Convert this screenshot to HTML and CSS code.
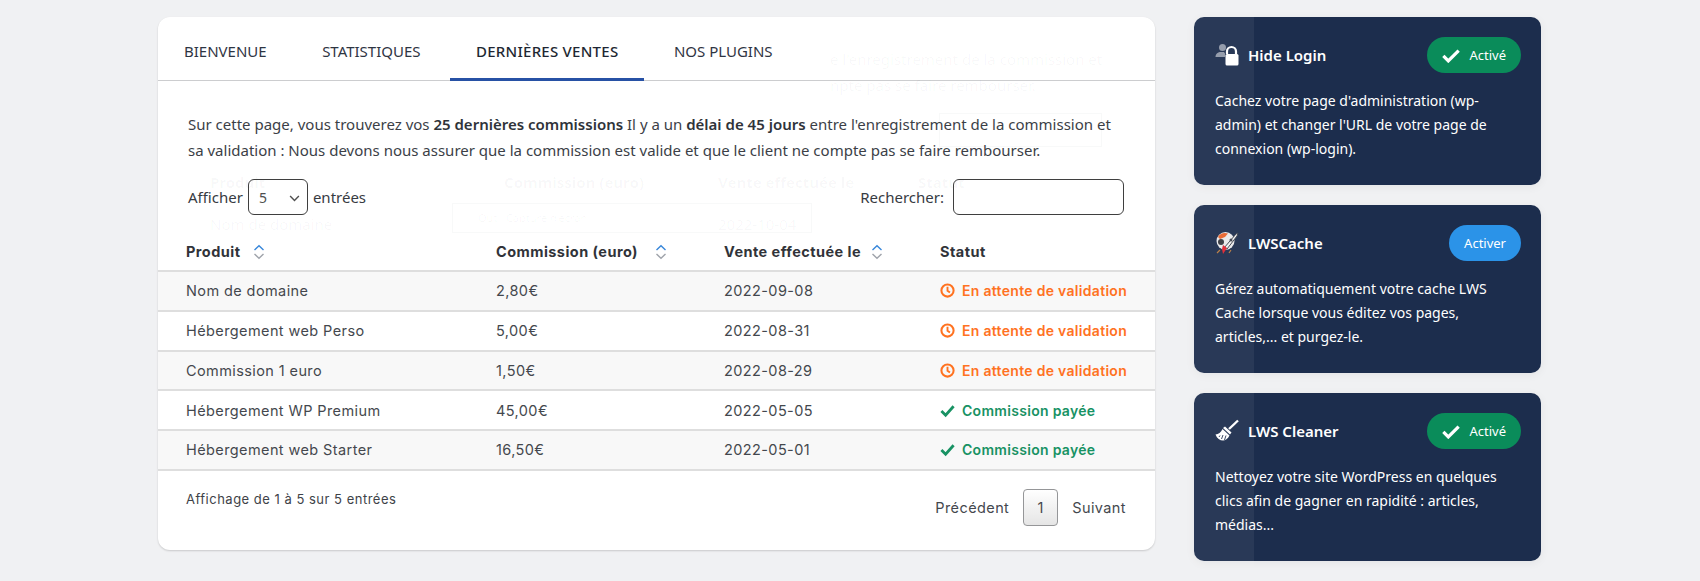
FILE: index.html
```html
<!DOCTYPE html>
<html lang="fr">
<head>
<meta charset="utf-8">
<title>Dernières ventes</title>
<link rel="stylesheet" href="styles.css">
</head>
<body>
<div class="page">
  <main class="panel">
    <nav class="tabs">
      <a class="tab">BIENVENUE</a>
      <a class="tab">STATISTIQUES</a>
      <a class="tab tab-active">DERNIÈRES VENTES</a>
      <a class="tab">NOS PLUGINS</a>
    </nav>
    <p class="intro">Sur cette page, vous trouverez vos <b>25 dernières commissions</b> Il y a un <b>délai de 45 jours</b> entre l'enregistrement de la commission et sa validation : Nous devons nous assurer que la commission est valide et que le client ne compte pas se faire rembourser.</p>
    <div class="controls">
      <label class="length">Afficher
        <span class="select-wrap">
          <select class="select"><option>5</option></select>
          <svg class="chevron" viewBox="0 0 12 8" width="11" height="7"><path d="M1 1.2 6 6.2 11 1.2" fill="none" stroke="#444" stroke-width="1.6"/></svg>
        </span>
        entrées</label>
      <label class="search">Rechercher:<input class="search-input" type="text"></label>
    </div>
    <table class="sales">
      <colgroup><col class="c1"><col class="c2"><col class="c3"><col class="c4"></colgroup>
      <thead>
        <tr>
          <th><span class="th-in">Produit<svg class="sort s1" viewBox="0 0 12 16" width="12" height="16"><path d="M1.5 6 6 1.8 10.5 6" fill="none" stroke="#2b7fd8" stroke-width="1.4"/><path d="M1.5 10 6 14.2 10.5 10" fill="none" stroke="#9a9ea6" stroke-width="1.4"/></svg></span></th>
          <th><span class="th-in">Commission (euro)<svg class="sort s2" viewBox="0 0 12 16" width="12" height="16"><path d="M1.5 6 6 1.8 10.5 6" fill="none" stroke="#2b7fd8" stroke-width="1.4"/><path d="M1.5 10 6 14.2 10.5 10" fill="none" stroke="#9a9ea6" stroke-width="1.4"/></svg></span></th>
          <th><span class="th-in">Vente effectuée le<svg class="sort s3" viewBox="0 0 12 16" width="12" height="16"><path d="M1.5 6 6 1.8 10.5 6" fill="none" stroke="#2b7fd8" stroke-width="1.4"/><path d="M1.5 10 6 14.2 10.5 10" fill="none" stroke="#9a9ea6" stroke-width="1.4"/></svg></span></th>
          <th>Statut</th>
        </tr>
      </thead>
      <tbody>
        <tr class="odd"><td>Nom de domaine</td><td>2,80€</td><td>2022-09-08</td><td><span class="status wait"><svg class="st-icon" viewBox="0 0 16 16" width="15" height="15"><circle cx="8" cy="8" r="6.5" fill="none" stroke="currentColor" stroke-width="2.2"/><path d="M8 4v4.3l2.6 1.9" fill="none" stroke="currentColor" stroke-width="2"/></svg>En attente de validation</span></td></tr>
        <tr><td>Hébergement web Perso</td><td>5,00€</td><td>2022-08-31</td><td><span class="status wait"><svg class="st-icon" viewBox="0 0 16 16" width="15" height="15"><circle cx="8" cy="8" r="6.5" fill="none" stroke="currentColor" stroke-width="2.2"/><path d="M8 4v4.3l2.6 1.9" fill="none" stroke="currentColor" stroke-width="2"/></svg>En attente de validation</span></td></tr>
        <tr class="odd"><td>Commission 1 euro</td><td>1,50€</td><td>2022-08-29</td><td><span class="status wait"><svg class="st-icon" viewBox="0 0 16 16" width="15" height="15"><circle cx="8" cy="8" r="6.5" fill="none" stroke="currentColor" stroke-width="2.2"/><path d="M8 4v4.3l2.6 1.9" fill="none" stroke="currentColor" stroke-width="2"/></svg>En attente de validation</span></td></tr>
        <tr><td>Hébergement WP Premium</td><td>45,00€</td><td>2022-05-05</td><td><span class="status paid"><svg class="st-icon" viewBox="0 0 16 16" width="15" height="15"><path d="M1.5 8.5 6 13 14.5 3.5" fill="none" stroke="currentColor" stroke-width="3"/></svg>Commission payée</span></td></tr>
        <tr class="odd"><td>Hébergement web Starter</td><td>16,50€</td><td>2022-05-01</td><td><span class="status paid"><svg class="st-icon" viewBox="0 0 16 16" width="15" height="15"><path d="M1.5 8.5 6 13 14.5 3.5" fill="none" stroke="currentColor" stroke-width="3"/></svg>Commission payée</span></td></tr>
      </tbody>
    </table>
    <div class="table-foot">
      <div class="info">Affichage de 1 à 5 sur 5 entrées</div>
      <div class="pager"><a>Précédent</a><a class="page-num">1</a><a>Suivant</a></div>
    </div>
  </main>

  <aside class="side">
    <section class="plugin">
      <header class="plugin-head">
        <svg class="plugin-icon" viewBox="0 0 24 24" width="24" height="24"><circle cx="7.5" cy="4.5" r="3.5" fill="#8f97a7"/><path d="M0.5 14c0-3.5 2.5-5 5.5-5h3l1 1.5v3.500z" fill="#8f97a7"/><path d="M12 11V8.500a4.500 4.500 0 0 1 9 0V11" fill="none" stroke="#fff" stroke-width="2.2"/><rect x="10.500" y="11" width="13" height="11.500" rx="1.5" fill="#fff"/></svg>
        <h3 class="plugin-title">Hide Login</h3>
        <span class="badge on"><svg class="badge-check" viewBox="0 0 20 16" width="18" height="15"><path d="M1.5 8.5 7 14 18.5 2.5" fill="none" stroke="#fff" stroke-width="3.6"/></svg>Activé</span>
      </header>
      <p class="plugin-text">Cachez votre page d'administration (wp-admin) et changer l'URL de votre page de connexion (wp-login).</p>
    </section>
    <section class="plugin">
      <header class="plugin-head">
        <svg class="plugin-icon" viewBox="0 0 24 24" width="24" height="24"><circle cx="10.500" cy="10" r="9" fill="#e9e9ea"/><path d="M3 6c2-3.500 6-5 10-3.500L10 6 5 8z" fill="#e8622a"/><circle cx="6" cy="11" r="3" fill="#33363d"/><path d="M9 17 21 3l2-1-1 3-10 13z" fill="#f4f4f4" stroke="#3a3f4a" stroke-width="1"/><path d="M8 14l4 3-4 6-1-5z" fill="#e0232e"/><circle cx="16" cy="9" r="1.5" fill="#3a3f4a"/><path d="M2 22l3-3M14 22l2-3" stroke="#b9793e" stroke-width="1.2"/></svg>
        <h3 class="plugin-title">LWSCache</h3>
        <span class="badge off">Activer</span>
      </header>
      <p class="plugin-text">Gérez automatiquement votre cache LWS Cache lorsque vous éditez vos pages, articles,... et purgez-le.</p>
    </section>
    <section class="plugin">
      <header class="plugin-head">
        <svg class="plugin-icon" viewBox="0 0 24 24" width="24" height="24"><path d="M14 10 23 1.500" stroke="#fff" stroke-width="2.4" fill="none"/><path d="M10 7.500l6.500 6-1.500 2-7-6.500z" fill="#fff"/><path d="M7.500 10 14.500 16.500C13 20 10 21.500 8 21.500 5 21.500 2 19.500 0.500 15.500 3.500 15 6 13.500 7.500 10z" fill="#fff"/><path d="M5 16.500 4 18M8 16 6.500 20M11 16.500 9.500 21" stroke="#1c2d4d" stroke-width=".9"/></svg>
        <h3 class="plugin-title">LWS Cleaner</h3>
        <span class="badge on"><svg class="badge-check" viewBox="0 0 20 16" width="18" height="15"><path d="M1.5 8.5 7 14 18.5 2.5" fill="none" stroke="#fff" stroke-width="3.6"/></svg>Activé</span>
      </header>
      <p class="plugin-text">Nettoyez votre site WordPress en quelques clics afin de gagner en rapidité : articles, médias...</p>
    </section>
  </aside>
</div>

<div class="ghost" aria-hidden="true">
  <span class="g g1">e l'enregistrement de la commission et</span>
  <span class="g g2">npte pas se faire rembourser.</span>
  <span class="gb gb1"></span>
  <span class="g g3">Produit</span>
  <span class="g g4">Commission (euro)</span>
  <span class="g g5">Vente effectuée le</span>
  <span class="g g6">Statut</span>
  <span class="g g7">Nom de domaine</span>
  <span class="g g8">2022-10-04</span>
  <span class="gb gb2"></span>
  <span class="g g9">Outil Capture d'écran</span>
</div>
</body>
</html>
```

FILE: styles.css
```css
* { box-sizing: border-box; }
html, body { margin: 0; height: 581px; overflow: hidden; }
body {
  background: #f0f1f3;
  font-family: "Noto Sans", "Open Sans", sans-serif;
  color: #2b2f36;
  position: relative;
}
.page {
  display: flex;
  align-items: flex-start;
  gap: 39px;
  padding: 17px 0 0 158px;
}

/* main panel */
.panel {
  width: 997px;
  height: 533px;
  background: #fff;
  border-radius: 12px;
  box-shadow: 0 1px 2px rgba(0, 0, 0, .18);
}
.tabs {
  display: flex;
  gap: 3.5px;
  height: 64px;
  border-bottom: 1px solid #c9cacd;
}
.tab {
  display: flex;
  align-items: center;
  height: 64px;
  padding: 4px 26px 0;
  font-size: 15px;
  color: #1f2937;
}
.tab-active {
  font-weight: 500;
  color: #111827;
  letter-spacing: .25px;
  border-bottom: 3px solid #1a47a0;
  padding-top: 7px;
}
.intro {
  margin: 0;
  padding: 30px 30px 0 30px;
  font-size: 15px;
  line-height: 26px;
  color: #30343b;
  height: 82px;
}
.intro b { font-weight: 600; color: #23272e; }
.controls {
  display: flex;
  justify-content: space-between;
  padding: 16px 31px 0 30px;
  font-size: 15px;
  height: 52px;
}
.length, .search { display: flex; align-items: center; gap: 5px; height: 36px; }
.search { gap: 9px; }
.select-wrap { position: relative; display: block; width: 60px; height: 36px; }
.select {
  width: 60px;
  height: 36px;
  appearance: none;
  background: #fff;
  border: 1px solid #333;
  border-radius: 6px;
  padding: 2px 10px;
  font: 14px "Noto Sans", sans-serif;
  color: #444;
}
.chevron { position: absolute; right: 8px; top: 16px; }
.search-input {
  width: 171px;
  height: 36px;
  background: #fff;
  border: 1px solid #333;
  border-radius: 6px;
}

/* table */
.sales {
  width: 997px;
  border-collapse: separate;
  border-spacing: 0;
  table-layout: fixed;
  font-family: Inter, "Noto Sans", sans-serif;
  font-size: 14.5px;
  letter-spacing: .4px;
}
.c1 { width: 310px; }
.c2 { width: 228px; }
.c3 { width: 216px; }
.c4 { width: 243px; }
.sales th, .sales td { padding: 0 0 0 28px; text-align: left; }
.sales th {
  height: 57px;
  padding-top: 18px;
  font-size: 14.5px;
  font-weight: 700;
  letter-spacing: .45px;
  color: #24272d;
  border-bottom: 2px solid #dcdcdc;
}
.th-in { display: flex; align-items: center; }
.sort { flex: none; }
.s1 { margin-left: 13px; }
.s2 { margin-left: 17px; }
.s3 { margin-left: 10px; }
.sales td {
  height: 39.75px;
  color: #383c43;
  border-bottom: 2px solid #dcdcdc;
}
.odd td { background: #f8f8f8; }
.status {
  display: flex;
  align-items: center;
  gap: 7px;
  font-weight: 600;
  font-size: 14px;
  letter-spacing: .3px;
}
.st-icon { flex: none; }
.wait { color: #ff6a13; }
.paid { color: #0a8c5a; }

.table-foot {
  display: flex;
  justify-content: space-between;
  align-items: flex-start;
  padding: 18px 29px 0 28px;
  font-family: Inter, "Noto Sans", sans-serif;
}
.info { font-size: 13px; letter-spacing: .5px; color: #33363c; padding-top: 2px; }
.pager { display: flex; align-items: center; gap: 14px; font-size: 14.5px; letter-spacing: .4px; color: #383c43; }
.page-num {
  width: 35px;
  height: 37px;
  display: flex;
  align-items: center;
  justify-content: center;
  border: 1px solid #8f9092;
  border-radius: 4px;
  background: linear-gradient(#fff, #e4e4e4);
}

/* side */
.side { width: 347px; display: flex; flex-direction: column; gap: 20px; }
.plugin {
  height: 168px;
  background: #1c2d4d;
  border-radius: 10px;
  padding: 20px 20px 0 21px;
  color: #fff;
  box-shadow: 0 2px 10px rgba(0, 0, 0, .06);
}
.plugin-head { display: flex; align-items: center; height: 36px; }
.plugin-icon { flex: none; margin-right: 9px; }
.plugin-title { margin: 0; font-size: 15px; font-weight: 600; flex: 1; }
.badge {
  height: 36px;
  border-radius: 18px;
  display: flex;
  align-items: center;
  font-size: 13px;
  padding: 0 15px;
}
.on { background: #0a8c5a; }
.off { background: #2b93e8; }
.badge-check { margin-right: 9px; }
.plugin-text {
  margin: 16px 0 0;
  padding-right: 20px;
  font-size: 14px;
  line-height: 24px;
  color: #fff;
}

/* faint leftover of a fading layer on top of the page */
.ghost {
  position: absolute;
  left: 134px;
  top: 0;
  width: 1120px;
  height: 567px;
  background: rgba(255, 255, 255, .06);
  pointer-events: none;
  font-family: "Noto Sans", sans-serif;
  font-size: 15px;
}
.g { position: absolute; color: rgba(40, 50, 70, .035); white-space: nowrap; }
.gb { position: absolute; border: 1px solid rgba(40, 50, 70, .03); }
.g1 { left: 696px; top: 49px; }
.g2 { left: 696px; top: 75px; }
.gb1 { left: 805px; top: 113px; width: 163px; height: 34px; }
.g3 { left: 76px; top: 172px; font-weight: 700; }
.g4 { left: 370px; top: 172px; font-weight: 700; }
.g5 { left: 584px; top: 172px; font-weight: 700; }
.g6 { left: 784px; top: 172px; font-weight: 700; }
.g7 { left: 76px; top: 214px; }
.g8 { left: 584px; top: 214px; }
.gb2 { left: 318px; top: 203px; width: 360px; height: 30px; }
.g9 { left: 344px; top: 210px; font-size: 11px; }
```
